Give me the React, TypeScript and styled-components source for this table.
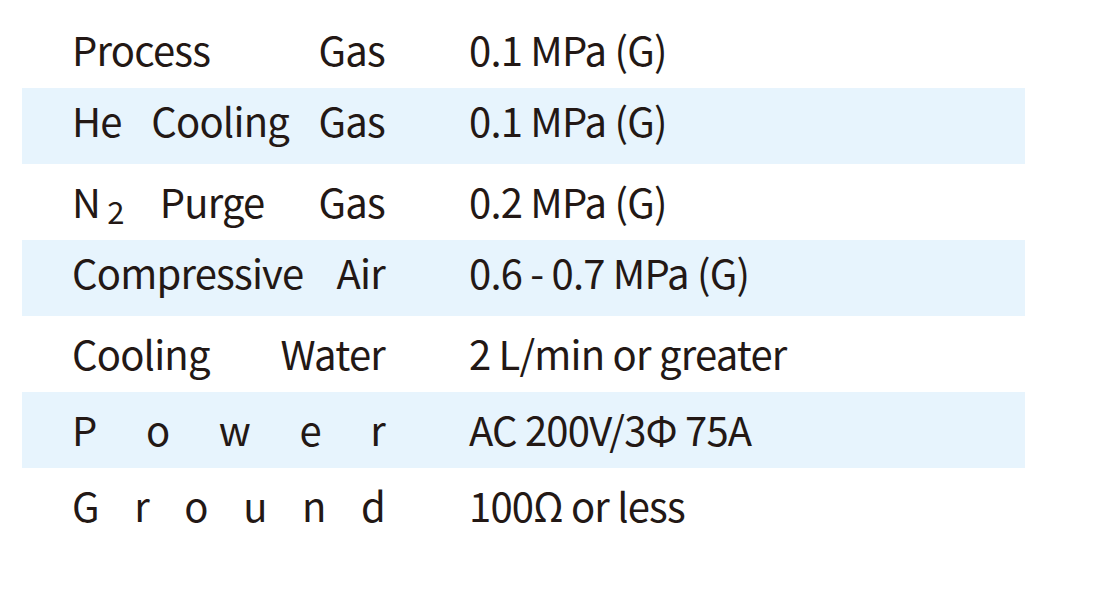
import type { ReactNode } from 'react';
import styled, { createGlobalStyle } from 'styled-components';

type Spec = {
  label: ReactNode[];
  value: string;
  lift?: boolean;
};

const GlobalStyle = createGlobalStyle`
  body {
    margin: 0;
    background: #ffffff;
    font-family: "Noto Sans CJK JP", "Noto Sans", sans-serif;
    color: #231815;
  }
`;

const Table = styled.div`
  margin: 12px 0 0 22px;
  width: 1003px;
  display: flex;
  flex-direction: column;
`;

const Row = styled.div<{ $shaded?: boolean; $lift?: boolean }>`
  height: 76px;
  box-sizing: border-box;
  display: grid;
  grid-template-columns: 313px 1fr;
  column-gap: 84px;
  align-items: center;
  padding: 0 0 ${(p) => (p.$lift ? '12px' : '2px')} 50px;
  background: ${(p) => (p.$shaded ? '#e7f4fd' : 'transparent')};
  font-size: 40px;
  line-height: 58px;
  letter-spacing: -0.8px;
`;

const Label = styled.div`
  display: flex;
  justify-content: space-between;
  white-space: nowrap;
`;

const Spaced = styled.span`
  margin-right: 18px;
`;

const Sub = styled.sub`
  font-size: 31px;
  vertical-align: -6px;
  margin-left: 7px;
  line-height: 0;
`;

const Value = styled.div`
  white-space: nowrap;
`;

const specs: Spec[] = [
  { label: ['Process', 'Gas'], value: '0.1 MPa (G)' },
  { label: ['He', 'Cooling', 'Gas'], value: '0.1 MPa (G)', lift: true },
  {
    label: [<>N<Sub>2</Sub></>, <Spaced>Purge</Spaced>, 'Gas'],
    value: '0.2 MPa (G)',
  },
  { label: ['Compressive', 'Air'], value: '0.6 - 0.7 MPa (G)', lift: true },
  { label: ['Cooling', 'Water'], value: '2 L/min or greater' },
  { label: 'Power'.split(''), value: 'AC 200V/3Φ 75A' },
  { label: 'Ground'.split(''), value: '100Ω or less' },
];

export default function App() {
  return (
    <>
      <GlobalStyle />
      <Table>
        {specs.map((s, i) => (
          <Row key={i} $shaded={i % 2 === 1} $lift={s.lift}>
            <Label>
              {s.label.map((w, j) => (
                <span key={j}>{w}</span>
              ))}
            </Label>
            <Value>{s.value}</Value>
          </Row>
        ))}
      </Table>
    </>
  );
}
